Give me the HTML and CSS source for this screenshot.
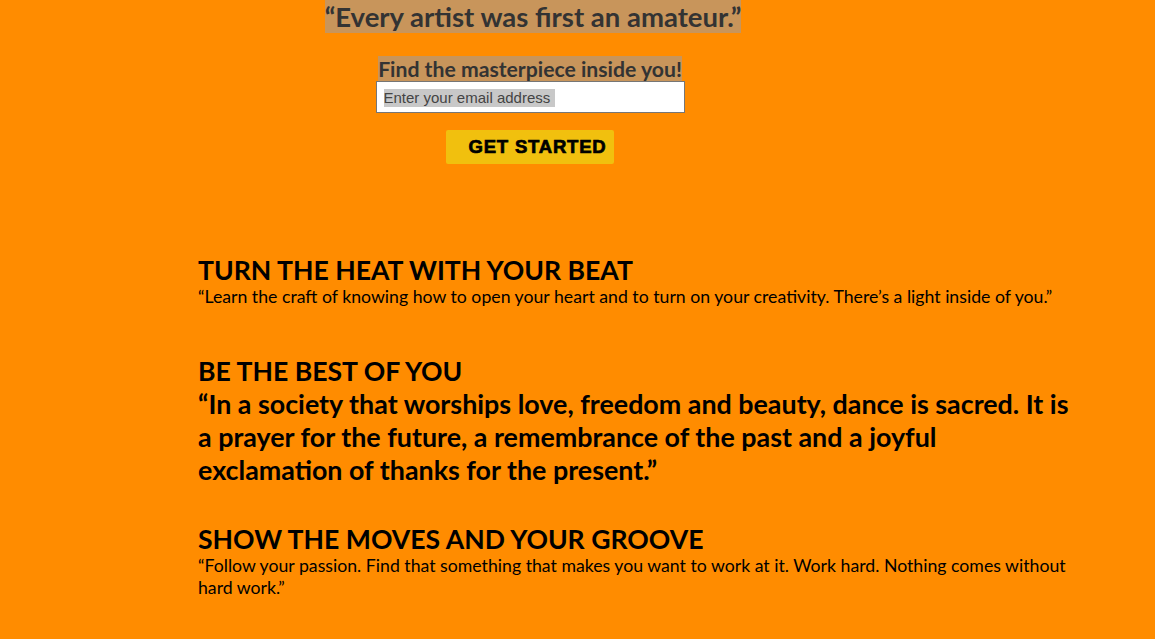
FILE: index.html
```html
<!DOCTYPE html>
<html lang="en">
<head>
<meta charset="utf-8">
<title>Dance</title>
<link rel="stylesheet" href="styles.css">
</head>
<body>
<header class="hero">
  <h1 class="quote"><span class="hl">“Every artist was first an amateur.”</span></h1>
  <form class="signup">
    <label class="tagline" for="email"><span class="hl">Find the masterpiece inside you!</span></label>
    <input id="email" class="email" type="email" placeholder="Enter your email address">
    <button class="cta" type="button">GET STARTED</button>
  </form>
</header>
<main class="features">
  <section class="feature">
    <h2 class="feature-title">TURN THE HEAT WITH YOUR BEAT</h2>
    <p class="feature-text">“Learn the craft of knowing how to open your heart and to turn on your creativity. There’s a light inside of you.”</p>
  </section>
  <section class="feature feature-tight">
    <h2 class="feature-title">BE THE BEST OF YOU</h2>
    <p class="feature-text big">“In a society that worships love, freedom and beauty, dance is sacred. It is a prayer for the future, a remembrance of the past and a joyful exclamation of thanks for the present.”</p>
  </section>
  <section class="feature">
    <h2 class="feature-title">SHOW THE MOVES AND YOUR GROOVE</h2>
    <p class="feature-text">“Follow your passion. Find that something that makes you want to work at it. Work hard. Nothing comes without hard work.”</p>
  </section>
</main>
</body>
</html>
```
FILE: styles.css
```css
html, body {
  background: #ff8c00;
}
body {
  margin: 0 8px;
  font-family: Lato, "Noto Sans", sans-serif;
  color: #000;
}
.hero {
  width: 1044px;
  display: flex;
  flex-direction: column;
  align-items: center;
}
.hl {
  background: #c8955b;
  color: #333;
}
.quote {
  margin: 0 0 0 6px;
  padding-top: 1px;
  font-size: 27.5px;
  font-weight: 700;
  line-height: 32px;
}
.signup {
  margin-top: 24px;
  display: flex;
  flex-direction: column;
  align-items: center;
}
.tagline {
  font-size: 21.2px;
  font-weight: 700;
  line-height: 24px;
}
.email {
  box-sizing: border-box;
  width: 309px;
  height: 32px;
  margin: 0;
  padding: 0 7px;
  border: 1px solid #767676;
  background: linear-gradient(#c8c8c8, #c8c8c8) no-repeat 7px 7px / 171px 18px, #fff;
  font-family: "Liberation Sans", Arial, sans-serif;
  font-size: 15px;
}
.email::placeholder {
  color: #444;
}
.cta {
  margin-top: 17px;
  height: 34px;
  padding: 0 8px 0 23px;
  border: none;
  border-radius: 2px;
  background: #f1c00e;
  font-family: "Liberation Sans", Arial, sans-serif;
  font-weight: 700;
  font-size: 18.5px;
  letter-spacing: 0.8px;
  -webkit-text-stroke: 0.7px #000;
  color: #000;
}
.features {
  margin: 90px 0 0 190px;
  width: 880px;
}
.feature {
  margin-bottom: 47px;
}
.feature-tight {
  margin-bottom: 37px;
}
.feature-title {
  margin: 0;
  font-size: 26.6px;
  font-weight: 700;
  line-height: 32px;
}
.feature-text {
  margin: 0;
  font-size: 17.7px;
  line-height: 22px;
}
.feature-text.big {
  font-size: 26.85px;
  font-weight: 700;
  line-height: 33px;
}
```
